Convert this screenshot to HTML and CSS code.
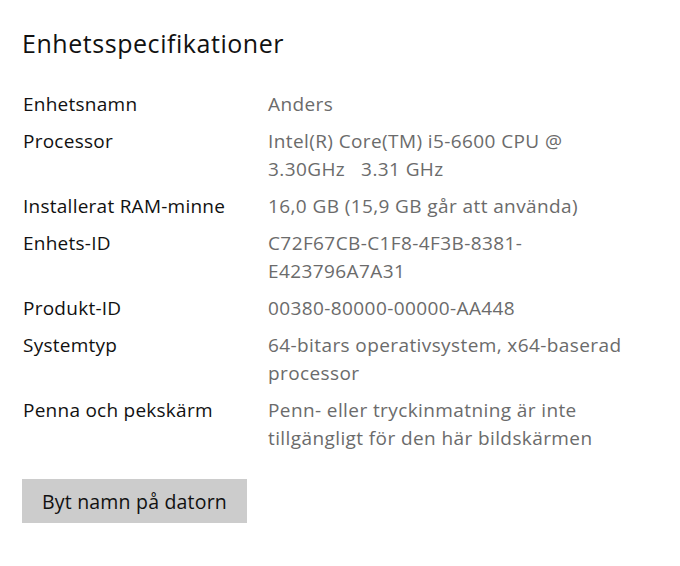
FILE: index.html
```html
<!DOCTYPE html>
<html lang="sv">
<head>
<meta charset="utf-8">
<link rel="stylesheet" href="styles.css">
</head>
<body>
<main class="page">
  <h1 class="title">Enhetsspecifikationer</h1>
  <dl class="specs">
    <dt>Enhetsnamn</dt><dd>Anders</dd>
    <dt>Processor</dt><dd>Intel(R) Core(TM) i5-6600 CPU @ 3.30GHz&nbsp;&nbsp; 3.31 GHz</dd>
    <dt>Installerat RAM-minne</dt><dd>16,0 GB (15,9 GB går att använda)</dd>
    <dt>Enhets-ID</dt><dd>C72F67CB-C1F8-4F3B-8381-<wbr>E423796A7A31</dd>
    <dt>Produkt-ID</dt><dd>00380-80000-00000-AA448</dd>
    <dt>Systemtyp</dt><dd>64-bitars operativsystem, x64-baserad processor</dd>
    <dt>Penna och pekskärm</dt><dd>Penn- eller tryckinmatning är inte tillgängligt för den här bildskärmen</dd>
  </dl>
  <button class="rename">Byt namn på datorn</button>
</main>
</body>
</html>
```
FILE: styles.css
```css
html, body {
  margin: 0;
  padding: 0;
  background: #ffffff;
}
.page {
  padding: 23px 0 0 22px;
  font-family: "Open Sans", "Noto Sans", sans-serif;
  color: #111111;
}
.title {
  margin: 0;
  font-size: 25px;
  letter-spacing: 0.55px;
  font-weight: 400;
  line-height: 40px;
}
.specs {
  display: grid;
  grid-template-columns: 245px 362px;
  row-gap: 9px;
  margin: 27px 0 0 1px;
  font-size: 19px;
  letter-spacing: 0.25px;
  line-height: 28px;
}
.specs dt {
  margin: 0;
  color: #111111;
}
.specs dd {
  margin: 0;
  color: #6b6b6b;
  letter-spacing: 0.4px;
}
.rename {
  margin-top: 27px;
  width: 225px;
  height: 44px;
  border: none;
  background: #cccccc;
  font-family: inherit;
  font-size: 19.5px;
  letter-spacing: 0.2px;
  color: #111111;
  padding: 0;
}
```
